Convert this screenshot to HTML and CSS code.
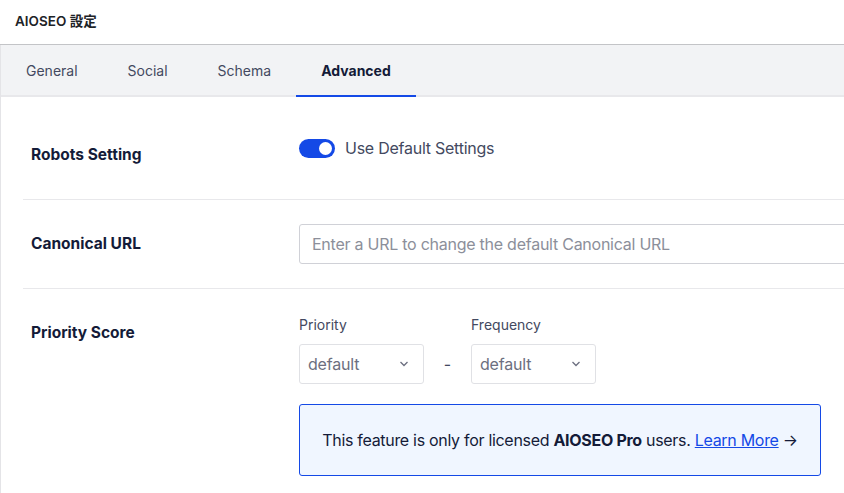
FILE: index.html
```html
<!DOCTYPE html>
<html lang="ja">
<head>
  <meta charset="UTF-8">
  <title>AIOSEO 設定</title>
  <link rel="stylesheet" href="styles.css">
</head>
<body>

  <div class="box-header">AIOSEO 設定</div>

  <div class="panel">
    <!-- タブ -->
    <div class="tabs">
      <div class="tab">General</div>
      <div class="tab">Social</div>
      <div class="tab">Schema</div>
      <div class="tab active">Advanced</div>
    </div>

    <div class="settings">
      <div class="row row-first">
        <div class="row-label">Robots Setting</div>
        <div class="row-content">
          <label class="toggle-line">
            <span class="toggle"><span class="knob"></span></span>
            Use Default Settings
          </label>
        </div>
      </div>

      <div class="row row-center">
        <div class="row-label">Canonical URL</div>
        <div class="row-content">
          <input class="text-input" type="text" placeholder="Enter a URL to change the default Canonical URL">
        </div>
      </div>

      <div class="row row-last">
        <div class="row-label">Priority Score</div>
        <div class="row-content">
          <div class="priority">
            <div class="field">
              <div class="field-label">Priority</div>
              <div class="select">default
                <svg width="10" height="6" viewBox="0 0 10 6"><path d="M1.5 1l3.5 3.5L8.5 1" fill="none" stroke="#6c6f80" stroke-width="1.3"/></svg>
              </div>
            </div>
            <div class="dash">-</div>
            <div class="field">
              <div class="field-label">Frequency</div>
              <div class="select">default
                <svg width="10" height="6" viewBox="0 0 10 6"><path d="M1.5 1l3.5 3.5L8.5 1" fill="none" stroke="#6c6f80" stroke-width="1.3"/></svg>
              </div>
            </div>
          </div>

          <div class="notice">This feature is only for licensed <strong>AIOSEO Pro</strong> users. <a href="#">Learn More</a> →</div>
        </div>
      </div>
    </div>
  </div>

</body>
</html>
```

FILE: styles.css
```css
body {
  margin: 0;
  font-family: Inter, "Noto Sans CJK JP", sans-serif;
  background-color: #ffffff;
  color: #434960;
  overflow: hidden;
  width: 844px;
  height: 493px;
}

.box-header {
  height: 44px;
  line-height: 42px;
  padding-left: 15px;
  font-size: 13.5px;
  font-weight: 600;
  color: #1d2327;
  border-bottom: 1px solid #c3c4c7;
}

.panel {
  border-left: 1px solid #e4e4e7;
}

.tabs {
  display: flex;
  background-color: #f2f3f5;
  border-bottom: 2px solid #e8e8eb;
  height: 50px;
}

.tab {
  padding: 0 25px;
  line-height: 52px;
  font-size: 14px;
  color: #434960;
}

.tab.active {
  font-weight: 700;
  color: #141b38;
  box-shadow: inset 0 -2px 0 #1449e6;
  margin-bottom: -2px;
  height: 52px;
}

.settings {
  padding: 0 0 0 22px;
}

.row {
  display: flex;
  align-items: flex-start;
  border-bottom: 1px solid #e8e8eb;
}

.row-first {
  padding: 41px 0 34px;
}

.row-last {
  border-bottom: none;
  padding: 27px 0 20px;
}

.row-center {
  align-items: center;
  padding: 24px 0;
}

.row-label {
  width: 276px;
  flex-shrink: 0;
  padding-left: 8px;
  padding-top: 7px;
  box-sizing: border-box;
  font-size: 15.5px;
  line-height: 20px;
  font-weight: 700;
  color: #141b38;
}

.row-center .row-label {
  padding-top: 0;
}

.row-content {
  flex: 1;
}

.toggle-line {
  display: flex;
  align-items: center;
  gap: 10px;
  font-size: 16px;
  line-height: 20px;
  letter-spacing: -0.25px;
  color: #434960;
}

.toggle {
  width: 36px;
  height: 19px;
  border-radius: 10px;
  background-color: #1449e6;
  position: relative;
}

.knob {
  position: absolute;
  right: 3px;
  top: 3px;
  width: 13px;
  height: 13px;
  border-radius: 50%;
  background-color: #ffffff;
}

.text-input {
  display: block;
  width: 600px;
  height: 40px;
  box-sizing: border-box;
  border: 1px solid #d0d1d7;
  border-radius: 3px;
  padding: 0 12px;
  font-family: inherit;
  font-size: 16px;
  letter-spacing: -0.25px;
  color: #434960;
}

.text-input::placeholder {
  color: #8c8f9a;
}

.priority {
  display: flex;
  align-items: flex-end;
}

.field-label {
  font-size: 14px;
  line-height: 18px;
  color: #434960;
  margin-bottom: 10px;
}

.select {
  width: 125px;
  height: 40px;
  box-sizing: border-box;
  border: 1px solid #e0e1e5;
  border-radius: 3px;
  padding: 0 14px 0 8px;
  display: flex;
  align-items: center;
  justify-content: space-between;
  font-size: 16px;
  letter-spacing: -0.2px;
  color: #6c6f80;
}

.dash {
  width: 47px;
  text-align: center;
  line-height: 40px;
  font-size: 16px;
  color: #434960;
}

.notice {
  margin-top: 20px;
  width: 522px;
  height: 72px;
  box-sizing: border-box;
  border: 1px solid #1449e6;
  border-radius: 3px;
  background-color: #f0f6ff;
  text-align: center;
  line-height: 70px;
  font-size: 16px;
  letter-spacing: -0.3px;
  color: #141b38;
  white-space: nowrap;
}

.notice strong {
  font-weight: 700;
}

.notice a {
  color: #1449e6;
  text-decoration: underline;
}
```
